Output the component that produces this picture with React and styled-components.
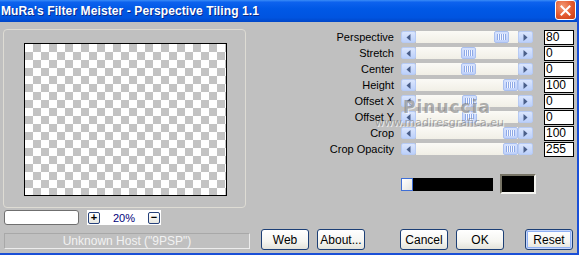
import React from "react";
import styled, { createGlobalStyle } from "styled-components";

const Global = createGlobalStyle`
  html, body { margin: 0; padding: 0; background: #c0c0c0; }
  body { font-family: "Liberation Sans", Arial, sans-serif; }
  * { box-sizing: border-box; }
`;

const Window = styled.div`
  position: relative;
  width: 579px;
  height: 255px;
  background: #c0c0c0;
  border-right: 2px solid #1a4fd6;
  border-bottom: 2px solid #1a4fd6;
  display: flex;
  flex-direction: column;
  overflow: hidden;
`;

const TitleBar = styled.div`
  height: 22px;
  flex: none;
  display: flex;
  align-items: center;
  justify-content: space-between;
  padding: 0 1px 0 1px;
  background: linear-gradient(#3a8cf7 0%, #0d62ee 10%, #0058e6 40%, #0054e0 80%, #0046c8 100%);
`;

const Title = styled.div`
  color: #fff;
  font-family: "Liberation Sans", Arial, sans-serif;
  font-weight: bold;
  font-size: 12px;
  letter-spacing: 0.1px;
  text-shadow: 1px 1px 0 #0a2a8c;
  white-space: nowrap;
`;

const CloseButton = styled.div`
  width: 21px;
  height: 20px;
  margin-bottom: 2px;
  border: 1px solid #fff;
  border-radius: 3px;
  background: radial-gradient(circle at 35% 30%, #f49a74 0%, #e2572d 55%, #c73c14 100%);
  display: flex;
  align-items: center;
  justify-content: center;
`;

const Body = styled.div`
  flex: 1;
  display: flex;
  flex-direction: column;
  padding-top: 7px;
`;

const TopRow = styled.div`
  display: flex;
  align-items: flex-start;
`;

const LeftCol = styled.div`
  margin-left: 3px;
  width: 247px;
  display: flex;
  flex-direction: column;
`;

const GroupBox = styled.div`
  width: 243px;
  height: 179px;
  border: 1px solid #dedcd4;
  border-radius: 4px;
  padding: 13px 0 0 20px;
`;

const Preview = styled.div`
  width: 203px;
  height: 153px;
  border: 1px solid #000;
  background: repeating-conic-gradient(#c3c3c3 0 25%, #ffffff 0 50%) 0 0 / 16px 16px;
`;

const ZoomRow = styled.div`
  margin-top: 2px;
  margin-left: 1px;
  height: 15px;
  display: flex;
  align-items: center;
`;

const ZoomInput = styled.div`
  width: 75px;
  height: 15px;
  background: #fff;
  border: 1px solid #6f6f6f;
  border-radius: 3px;
`;

const ZoomControls = styled.div`
  margin-left: 8px;
  width: 74px;
  height: 15px;
  background: #fff;
  display: flex;
  align-items: center;
  padding-left: 1px;
`;

const TinyButton = styled.div`
  width: 12px;
  height: 12px;
  border: 1px solid #25407a;
  border-radius: 2px;
  background: linear-gradient(#ffffff, #e6e6e0);
  display: flex;
  align-items: center;
  justify-content: center;
  font-size: 11px;
  line-height: 1;
  color: #000;
  font-weight: bold;
`;

const ZoomValue = styled.div`
  width: 48px;
  text-align: center;
  font-size: 11px;
  color: #00007a;
`;

const RightPanel = styled.div`
  margin-left: 50px;
  display: flex;
  flex-direction: column;
`;

const SliderRow = styled.div`
  height: 16px;
  display: flex;
  align-items: center;
`;

const Label = styled.div`
  width: 94px;
  text-align: right;
  font-size: 11px;
  color: #000;
  white-space: nowrap;
`;

const ScrollBar = styled.div`
  margin-left: 7px;
  width: 132px;
  height: 12px;
  display: flex;
`;

const ArrowButton = styled.div`
  width: 15px;
  height: 12px;
  flex: none;
  border: 1px solid #b7cbf5;
  border-radius: 2px;
  background: linear-gradient(#dbe6fd, #bcd0fa);
  display: flex;
  align-items: center;
  justify-content: center;
`;

const Track = styled.div`
  position: relative;
  flex: 1;
  height: 12px;
  background: linear-gradient(#fbfaf6, #f1efe6);
`;

const Thumb = styled.div`
  position: absolute;
  top: 0;
  width: 15px;
  height: 12px;
  border: 1px solid #aac0f0;
  border-radius: 2px;
  background: linear-gradient(#d6e2fd, #bfd1fa);
  display: flex;
  align-items: center;
  justify-content: center;
`;

const Grip = styled.div`
  width: 9px;
  height: 6px;
  background: repeating-linear-gradient(90deg, #8ea9e6 0 1px, #f4f7ff 1px 2px);
`;

const ValueBox = styled.div`
  margin-left: 11px;
  width: 30px;
  height: 15px;
  border: 1px solid #000;
  background: #fff;
  font-size: 12px;
  line-height: 13px;
  padding-left: 1px;
  color: #000;
`;

const ColorRow = styled.div`
  margin-top: 17px;
  padding-left: 101px;
  height: 20px;
  display: flex;
  align-items: center;
`;

const SmallSwatch = styled.div`
  width: 12px;
  height: 13px;
  border: 1px solid #3f6fd6;
  background: linear-gradient(135deg, #ffffff, #e4e4e0);
`;

const GradientBar = styled.div`
  width: 80px;
  height: 13px;
  background: #000;
`;

const BigSwatch = styled.div`
  margin-left: 7px;
  width: 36px;
  height: 20px;
  background: #000;
  border: 2px solid;
  border-color: #777466 #f4f4f0 #f4f4f0 #777466;
`;

const BottomRow = styled.div`
  margin-top: 4px;
  display: flex;
  align-items: flex-start;
`;

const StatusBar = styled.div`
  margin-left: 4px;
  margin-top: 4px;
  width: 246px;
  height: 16px;
  border: 1px solid;
  border-color: #a8a8a8 #ececec #ececec #a8a8a8;
  color: #f2f2f2;
  font-size: 12px;
  line-height: 14px;
  text-align: center;
`;

const Button = styled.div`
  margin-left: ${(p) => p.$gap}px;
  width: 48px;
  height: 21px;
  border: 1px solid #1c3f76;
  border-radius: 3px;
  background: linear-gradient(#ffffff 0%, #f5f5f1 60%, #e3e2da 100%);
  box-shadow: ${(p) =>
    p.$default ? "inset 0 0 0 1px #c6d6fb, inset 0 0 0 2px #8fb0f3" : "none"};
  display: flex;
  align-items: center;
  justify-content: center;
  font-size: 12px;
  color: #000;
`;

const Watermark = styled.div`
  position: absolute;
  left: ${(p) => p.$x}px;
  top: ${(p) => p.$y}px;
  font-family: "DejaVu Sans", sans-serif;
  font-weight: ${(p) => (p.$big ? "bold" : "normal")};
  font-size: ${(p) => (p.$big ? 17 : 11)}px;
  letter-spacing: ${(p) => (p.$big ? 1 : 0)}px;
  color: rgba(110, 110, 110, 0.55);
  text-shadow: 1px 1px 0 rgba(255, 255, 255, 0.7);
  pointer-events: none;
  white-space: nowrap;
`;

const LeftArrow = () => (
  <svg width="5" height="7" viewBox="0 0 5 7">
    <polygon points="4.5,0 0.5,3.5 4.5,7" fill="#4a5f8a" />
  </svg>
);

const RightArrow = () => (
  <svg width="5" height="7" viewBox="0 0 5 7">
    <polygon points="0.5,0 4.5,3.5 0.5,7" fill="#4a5f8a" />
  </svg>
);

const sliders = [
  { label: "Perspective", value: "80", pos: 0.9 },
  { label: "Stretch", value: "0", pos: 0.52 },
  { label: "Center", value: "0", pos: 0.52 },
  { label: "Height", value: "100", pos: 1 },
  { label: "Offset X", value: "0", pos: 0.53 },
  { label: "Offset Y", value: "0", pos: 0.53 },
  { label: "Crop", value: "100", pos: 1 },
  { label: "Crop Opacity", value: "255", pos: 1 },
];

const TRACK = 102;
const THUMB = 15;

export default function App() {
  return (
    <>
      <Global />
      <Window>
        <TitleBar>
          <Title>MuRa's Filter Meister - Perspective Tiling 1.1</Title>
          <CloseButton>
            <svg width="11" height="11" viewBox="0 0 11 11">
              <path d="M1.5 1.5 L9.5 9.5 M9.5 1.5 L1.5 9.5" stroke="#fff" strokeWidth="2" strokeLinecap="square" />
            </svg>
          </CloseButton>
        </TitleBar>
        <Body>
          <TopRow>
            <LeftCol>
              <GroupBox>
                <Preview />
              </GroupBox>
              <ZoomRow>
                <ZoomInput />
                <ZoomControls>
                  <TinyButton>+</TinyButton>
                  <ZoomValue>20%</ZoomValue>
                  <TinyButton>−</TinyButton>
                </ZoomControls>
              </ZoomRow>
            </LeftCol>
            <RightPanel>
              {sliders.map((s) => (
                <SliderRow key={s.label}>
                  <Label>{s.label}</Label>
                  <ScrollBar>
                    <ArrowButton>
                      <LeftArrow />
                    </ArrowButton>
                    <Track>
                      <Thumb style={{ left: Math.round(s.pos * (TRACK - THUMB)) }}>
                        <Grip />
                      </Thumb>
                    </Track>
                    <ArrowButton>
                      <RightArrow />
                    </ArrowButton>
                  </ScrollBar>
                  <ValueBox>{s.value}</ValueBox>
                </SliderRow>
              ))}
              <ColorRow>
                <SmallSwatch />
                <GradientBar />
                <BigSwatch />
              </ColorRow>
            </RightPanel>
          </TopRow>
          <BottomRow>
            <StatusBar>Unknown Host ("9PSP")</StatusBar>
            <Button $gap={11}>Web</Button>
            <Button $gap={8}>About...</Button>
            <Button $gap={35}>Cancel</Button>
            <Button $gap={8}>OK</Button>
            <Button $gap={21} $default>
              Reset
            </Button>
          </BottomRow>
        </Body>
        <Watermark $big $x={403} $y={97}>
          Pinuccia
        </Watermark>
        <Watermark $x={375} $y={116}>
          www.madiresgrafica.eu
        </Watermark>
      </Window>
    </>
  );
}
